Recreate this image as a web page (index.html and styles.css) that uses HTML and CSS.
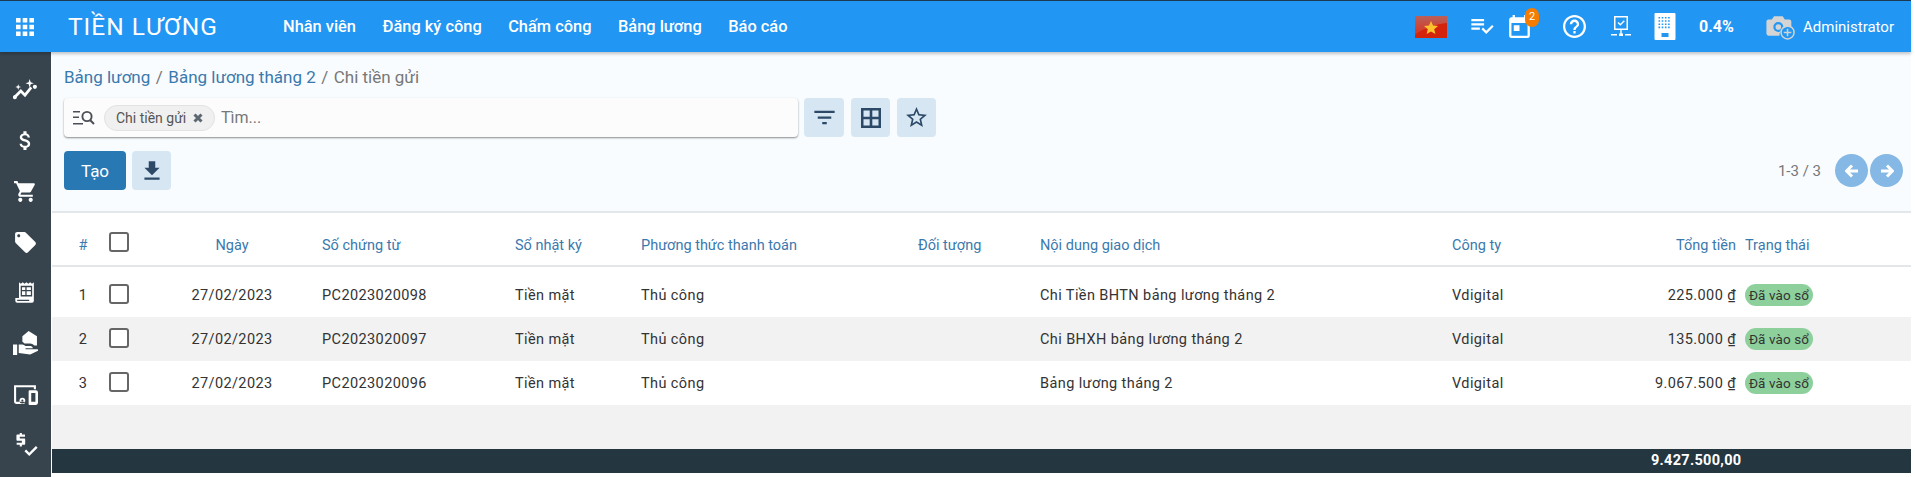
FILE: index.html
```html
<!DOCTYPE html>
<html lang="vi">
<head>
<meta charset="utf-8">
<title>Tiền lương</title>
<link rel="stylesheet" href="styles.css">
</head>
<body>
<div class="app">
  <header class="topbar">
    <svg class="apps" viewBox="0 0 18 18"><path d="M0 0h4.6v4.6H0zM6.7 0h4.6v4.6H6.7zM13.4 0H18v4.6h-4.6zM0 6.7h4.6v4.6H0zM6.7 6.7h4.6v4.6H6.7zM13.4 6.7H18v4.6h-4.6zM0 13.4h4.6V18H0zM6.7 13.4h4.6V18H6.7zM13.4 13.4H18V18h-4.6z"/></svg>
    <div class="brand">TIỀN LƯƠNG</div>
    <nav class="menu">
      <a>Nhân viên</a><a>Đăng ký công</a><a>Chấm công</a><a>Bảng lương</a><a>Báo cáo</a>
    </nav>
    <div class="systray">
      <svg class="flag" viewBox="0 0 32 22">
        <defs><linearGradient id="gloss" x1="0" y1="0" x2="0" y2="1"><stop offset="0" stop-color="#b9605a"/><stop offset="1" stop-color="#d9331f"/></linearGradient></defs>
        <rect width="32" height="22" fill="#d4230c"/>
        <path d="M0 0h32v7C22 8 8 12 0 19z" fill="url(#gloss)"/>
        <polygon points="16,5 18,9.6 23,10 19.2,13.2 20.4,18 16,15.4 11.6,18 12.8,13.2 9,10 14,9.6" fill="#fdc32c"/>
      </svg>
      <svg class="tray-list" viewBox="2 5 21 16"><path d="M14 10H2v2h12v-2zm0-4H2v2h12V6zM2 16h8v-2H2v2zm19.5-4.5L23 13l-6.99 7-4.51-4.5L13 14l3.01 3 5.49-5.5z"/></svg>
      <div class="cal">
        <svg class="tray-cal" viewBox="3 1 18 20"><path d="M19 3h-1V1h-2v2H8V1H6v2H5c-1.11 0-1.99.9-1.99 2L3 19c0 1.1.89 2 2 2h14c1.1 0 2-.9 2-2V5c0-1.1-.9-2-2-2zm0 16H5V8h14v11zM7 10h5v5H7z"/></svg>
        <span class="badge">2</span>
      </div>
      <svg class="tray-help" viewBox="2 2 20 20"><path d="M11 18h2v-2h-2v2zm1-16C6.48 2 2 6.48 2 12s4.48 10 10 10 10-4.48 10-10S17.52 2 12 2zm0 18c-4.41 0-8-3.59-8-8s3.59-8 8-8 8 3.59 8 8-3.59 8-8 8zm0-14c-2.21 0-4 1.79-4 4h2c0-1.1.9-2 2-2s2 .9 2 2c0 2-3 1.75-3 5h2c0-2.25 3-2.5 3-5 0-2.21-1.79-4-4-4z"/></svg>
      <svg class="tray-mon" viewBox="0 0 20 22"><path d="M3 0h14v14H3zM4.500 1.500v11h11v-11z" fill-rule="evenodd"/><path d="M6.500 7l1-1 1.800 1.800L12.800 4.300l1 1L9.300 9.800z"/><path d="M9.300 14h1.400v4H9.300zM0 18h6v1.400H0zM14 18h6v1.400h-6zM8 17.600h4V20H8z"/></svg>
      <svg class="tray-bld" viewBox="0 0 21 27"><path fill-rule="evenodd" d="M1 0h19a1 1 0 0 1 1 1v25a1 1 0 0 1-1 1H1a1 1 0 0 1-1-1V1a1 1 0 0 1 1-1zM7 20v4h7v-4zM4 4v1.600h1.600V4zM7.200 4v1.600h1.600V4zM10.400 4v1.600H12V4zM13.600 4v1.600h1.600V4zM4 7.200v1.600h1.600V7.200zM7.200 7.200v1.600h1.600V7.200zM10.400 7.200v1.600H12V7.200zM13.600 7.200v1.600h1.600V7.200zM4 10.400V12h1.600v-1.600zM7.200 10.400V12h1.600v-1.600zM10.400 10.400V12H12v-1.600zM13.600 10.400V12h1.600v-1.600zM4 13.600v1.600h1.600v-1.600zM7.200 13.600v1.600h1.600v-1.600zM10.400 13.600v1.600H12v-1.600zM13.600 13.600v1.600h1.600v-1.600z"/></svg>
      <span class="percent">0.4%</span>
      <svg class="tray-cam" viewBox="0 0 26 24"><path d="M7 2h8l2 3h4a2 2 0 0 1 2 2v5.500A8 8 0 0 0 12 20H2a2 2 0 0 1-2-2V7a2 2 0 0 1 2-2h3z" fill="#d4d4d4"/><circle cx="11" cy="12" r="4.600" fill="#2196f3"/><circle cx="11" cy="12" r="2.600" fill="#d4d4d4"/><circle cx="19.500" cy="17" r="6" fill="none" stroke="#d4d4d4" stroke-width="1.400"/><path d="M19.500 13.500v7M16 17h7" stroke="#d4d4d4" stroke-width="1.400"/></svg>
      <span class="user">Administrator</span>
    </div>
  </header>

  <aside class="sidebar">
    <svg class="side-ico" viewBox="0 0 24 24"><path d="M1.500 18.500l6-6 4 4 6-7.500" fill="none" stroke="#fff" stroke-width="2.600"/><circle cx="1.800" cy="18.500" r="1.900" fill="#fff"/><circle cx="21" cy="8.500" r="2" fill="#fff"/><path d="M16 1l1 3 3 1-3 1-1 3-1-3-3-1 3-1zM5 6l.7 2 2 .7-2 .7-.7 2-.7-2-2-.7 2-.7z" fill="#fff"/></svg>
    <svg class="side-ico" viewBox="0 0 24 24"><path d="M11.800 10.900c-2.270-.59-3-1.200-3-2.150 0-1.090 1.010-1.850 2.700-1.850 1.780 0 2.440.85 2.500 2.100h2.210c-.07-1.720-1.120-3.300-3.210-3.810V3h-3v2.160c-1.940.42-3.500 1.680-3.500 3.610 0 2.310 1.910 3.460 4.700 4.130 2.500.6 3 1.480 3 2.410 0 .69-.49 1.790-2.700 1.790-2.060 0-2.870-.92-2.980-2.100h-2.200c.12 2.190 1.760 3.420 3.680 3.830V21h3v-2.150c1.950-.37 3.500-1.500 3.500-3.550 0-2.840-2.430-3.810-4.700-4.400z"/></svg>
    <svg class="side-ico" viewBox="0 0 24 24"><path d="M7 18c-1.100 0-1.990.9-1.990 2S5.900 22 7 22s2-.9 2-2-.9-2-2-2zM1 2v2h2l3.600 7.590-1.350 2.450c-.16.28-.25.61-.25.96 0 1.100.9 2 2 2h12v-2H7.420c-.14 0-.25-.11-.25-.25l.03-.12.9-1.630h7.450c.75 0 1.410-.41 1.750-1.030l3.580-6.490c.08-.14.12-.31.12-.48 0-.55-.45-1-1-1H5.210l-.94-2H1zm16 16c-1.100 0-1.990.9-1.990 2s.89 2 1.990 2 2-.9 2-2-.9-2-2-2z"/></svg>
    <svg class="side-ico" viewBox="0 0 24 24"><path d="M21.410 11.580l-9-9C12.050 2.220 11.550 2 11 2H4c-1.100 0-2 .9-2 2v7c0 .55.22 1.050.59 1.420l9 9c.36.36.86.58 1.410.58.55 0 1.050-.22 1.410-.59l7-7c.37-.36.59-.86.59-1.410 0-.55-.23-1.060-.59-1.420zM5.500 7C4.670 7 4 6.330 4 5.500S4.670 4 5.500 4 7 4.670 7 5.500 6.330 7 5.500 7z"/></svg>
    <svg class="side-ico" viewBox="-1.500 -1.500 27 27"><path d="M5 1l2 1.500L9 1l2 1.500L13 1l2 1.500L17 1l2 1.500L21 1v20a2 2 0 0 1-2 2H3a2 2 0 0 1-2-2v-3h4z"/><path d="M7.500 5.500h11v10h-11zM7.500 10h11M12.500 5.500v10M3 20.500h13" fill="none" stroke="#37444e" stroke-width="1.400"/></svg>
    <svg class="side-ico" viewBox="0 0 24 24"><path fill-rule="evenodd" d="M15 0l8 5v9h-2.500c-1.200-1.300-2.500-2-4-2H11c-.700-.700-1.300-1.300-2-1.600V5zM0 13h4v10H0zM5.500 13H9c1 0 2 .5 3 1.500h4.500c1.500 0 2.500 1 2.500 2h-7v1h11c1.500 0 1.800 1 1 1.500l-7.500 3.500L5.500 21z"/></svg>
    <svg class="side-ico" viewBox="0 0 24 24"><path fill-rule="evenodd" d="M1 3h21v4h-2V5H3v14h8v2H3a2 2 0 0 1-2-2zM16 8h6a2 2 0 0 1 2 2v10a2 2 0 0 1-2 2h-6a1 1 0 0 1-1-1V9a1 1 0 0 1 1-1zM17.500 10.500V19h4v-8.500zM9 15a2.800 2.800 0 1 1 0 5.600A2.800 2.800 0 0 1 9 15zM9 16.800a1 1 0 1 0 0 2 1 1 0 0 0 0-2z"/></svg>
    <svg class="side-ico" viewBox="0 0 24 24"><path d="M6.500 1h2v1.500h3v2h-5v1.800h4.200c.600 0 1 .400 1 1v4c0 .600-.400 1-1 1H8.500V14h-2v-1.700h-3v-2h5V8.500H4.300c-.600 0-1-.400-1-1V3.500c0-.600.400-1 1-1h2.200zM11 18.500l1.600-1.600 3 3L22 13.500l1.600 1.600-8 8z"/></svg>
  </aside>

  <main class="content">
    <section class="control">
      <div class="crumbs">
        <a>Bảng lương</a><i>/</i><a>Bảng lương tháng 2</a><i>/</i><span>Chi tiền gửi</span>
      </div>
      <div class="search-row">
        <div class="search">
          <svg class="search-ico" viewBox="0 0 22 15"><path d="M0 1h7v1.600H0zM0 6.500h6v1.600H0zM0 13h10v1.600H0z"/><circle cx="14" cy="6.500" r="4.600" fill="none" stroke="#4a4f55" stroke-width="1.900"/><path d="M17 10l4 4" stroke="#4a4f55" stroke-width="2"/></svg>
          <div class="facet">Chi tiền gửi
            <svg class="facet-x" viewBox="0 0 10 10"><path d="M1.500 1.500l7 7M8.500 1.500l-7 7"/></svg>
          </div>
          <span class="placeholder">Tìm...</span>
        </div>
        <button class="tool tool-filter"><svg viewBox="0 0 24 24"><path d="M10 18h4v-2h-4v2zM3 6v2h18V6H3zm3 7h12v-2H6v2z"/></svg></button>
        <button class="tool tool-grid"><svg viewBox="0 0 24 24"><path fill-rule="evenodd" d="M2 2h20v20H2zM4.500 4.500v6.200h6.200V4.500zM13.300 4.500v6.200h6.200V4.500zM4.500 13.300v6.200h6.200v-6.200zM13.300 13.300v6.200h6.200v-6.200z"/></svg></button>
        <button class="tool tool-star"><svg viewBox="0 0 24 24"><path d="M22 9.240l-7.190-.62L12 2 9.190 8.630 2 9.240l5.460 4.730L5.820 21 12 17.270 18.180 21l-1.630-7.030L22 9.240zM12 15.400l-3.760 2.270 1-4.280-3.320-2.880 4.380-.38L12 6.100l1.710 4.040 4.380.38-3.320 2.880 1 4.280L12 15.400z"/></svg></button>
      </div>
      <div class="action-row">
        <button class="create">Tạo</button>
        <button class="tool tool-dl"><svg viewBox="0 0 24 24"><path d="M19 9h-4V3H9v6H5l7 7 7-7zM5 18v2h14v-2H5z"/></svg></button>
        <div class="pager">
          <span class="pager-text">1-3 / 3</span>
          <button class="round"><svg viewBox="0 0 14 14"><path d="M7 1.500L1.500 7 7 12.500M2 7h11"/></svg></button>
          <button class="round"><svg viewBox="0 0 14 14"><path d="M7 1.500L12.500 7 7 12.500M12 7H1"/></svg></button>
        </div>
      </div>
    </section>

    <section class="list">
      <table class="grid">
        <colgroup>
          <col class="c-no"><col class="c-chk"><col class="c-date"><col class="c-doc"><col class="c-jrn"><col class="c-pay"><col class="c-obj"><col class="c-desc"><col class="c-co"><col class="c-amt"><col class="c-state">
        </colgroup>
        <thead>
          <tr>
            <th class="no">#</th><th class="th-check"><span class="check"></span></th><th class="mid">Ngày</th><th>Số chứng từ</th><th>Sổ nhật ký</th><th>Phương thức thanh toán</th><th>Đối tượng</th><th>Nội dung giao dịch</th><th>Công ty</th><th class="end">Tổng tiền</th><th class="state">Trạng thái</th>
          </tr>
        </thead>
        <tbody>
          <tr>
            <td class="no">1</td><td><span class="check"></span></td><td class="mid">27/02/2023</td><td>PC2023020098</td><td>Tiền mặt</td><td>Thủ công</td><td></td><td>Chi Tiền BHTN bảng lương tháng 2</td><td>Vdigital</td><td class="end">225.000 <u>₫</u></td><td class="state"><span class="pill">Đã vào sổ</span></td>
          </tr>
          <tr>
            <td class="no">2</td><td><span class="check"></span></td><td class="mid">27/02/2023</td><td>PC2023020097</td><td>Tiền mặt</td><td>Thủ công</td><td></td><td>Chi BHXH bảng lương tháng 2</td><td>Vdigital</td><td class="end">135.000 <u>₫</u></td><td class="state"><span class="pill">Đã vào sổ</span></td>
          </tr>
          <tr>
            <td class="no">3</td><td><span class="check"></span></td><td class="mid">27/02/2023</td><td>PC2023020096</td><td>Tiền mặt</td><td>Thủ công</td><td></td><td>Bảng lương tháng 2</td><td>Vdigital</td><td class="end">9.067.500 <u>₫</u></td><td class="state"><span class="pill">Đã vào sổ</span></td>
          </tr>
        </tbody>
      </table>
      <div class="filler"></div>
      <div class="totals"><span>9.427.500,00</span></div>
    </section>
  </main>
</div>
</body>
</html>
```

FILE: styles.css
```css
* { box-sizing: border-box; }
html, body { margin: 0; height: 100%; background: #fff; overflow: hidden; }
body { font-family: Roboto, "Liberation Sans", sans-serif; color: #333; }
button { border: 0; padding: 0; font: inherit; }

.app {
  width: 1911px;
  height: 477px;
  border-top: 1px solid #1d3a52;
  display: grid;
  grid-template-columns: 51px 1fr;
  grid-template-rows: 51px 1fr;
}

/* top bar */
.topbar {
  grid-column: 1 / 3;
  background: #2196f3;
  display: flex;
  align-items: center;
  color: #fff;
  fill: #fff;
  box-shadow: 0 2px 3px rgba(0,0,0,.22);
  position: relative;
  z-index: 2;
}
.apps { width: 18px; height: 18px; margin-left: 16px; }
.brand { margin-left: 34px; width: 215px; font-size: 24.500px; letter-spacing: 1px; }
.menu { display: flex; gap: 26.500px; font-size: 16.400px; font-weight: 500; }
.menu a { display: block; }
.systray { margin-left: auto; display: flex; align-items: center; padding-right: 17px; }
.flag { width: 32px; height: 22px; margin-right: 24px; }
.tray-list { width: 23px; height: 17px; margin-right: 15px; }
.cal { position: relative; width: 21px; height: 23px; margin-right: 33px; }
.tray-cal { width: 21px; height: 23px; display: block; }
.badge {
  position: absolute; left: 16px; top: -7px;
  width: 14px; height: 19px; border-radius: 7px;
  background: #f57c00; font-size: 11px; line-height: 17px; text-align: center;
}
.tray-help { width: 23px; height: 23px; margin-right: 25px; }
.tray-mon { width: 20px; height: 22px; margin-right: 23px; }
.tray-bld { width: 22px; height: 27px; margin-right: 23px; }
.percent { font-size: 16px; font-weight: 700; width: 67px; }
.tray-cam { width: 29px; height: 26px; margin-right: 8px; }
.user { font-size: 15px; }

/* sidebar */
.sidebar {
  background: #37444e;
  display: flex;
  flex-direction: column;
  align-items: center;
  gap: 25.700px;
  padding-top: 25.500px;
  fill: #fff;
}
.side-ico { width: 25px; height: 25px; flex: none; }

/* main */
.content { display: flex; flex-direction: column; background: #fff; padding-left: 1px; height: 421px; }
.control {
  background: #f8fcfe;
  height: 161px;
  border-bottom: 2px solid #e3e7ea;
  padding: 13px 8px 0 12px;
}
.crumbs { font-size: 17px; line-height: 24px; color: #777; display: flex; }
.crumbs a { color: #3a79ad; }
.crumbs i { font-style: normal; margin: 0 5.500px; }

.search-row { display: flex; margin-top: 9px; }
.search {
  width: 734px; height: 39px;
  background: #fcfcfc;
  border-radius: 4px;
  box-shadow: 0 1px 2px rgba(0,0,0,.45);
  display: flex; align-items: center;
  padding-left: 9px;
}
.search-ico { width: 22px; height: 15px; fill: #4a4f55; margin-right: 9px; }
.facet {
  height: 26px; width: 111px;
  border: 1px solid #e2e2e2; border-radius: 13px;
  background: #f0f0f0;
  font-size: 14px; line-height: 24px; color: #555;
  padding-left: 11px;
  display: flex; align-items: center; gap: 7px;
}
.facet-x { width: 10px; height: 10px; stroke: #5d6770; stroke-width: 3; fill: none; }
.placeholder { font-size: 16px; color: #777; margin-left: 6px; }

.tool {
  width: 39px; height: 39px;
  background: #d6e6f2;
  border-radius: 4px;
  display: flex; align-items: center; justify-content: center;
  fill: #2c4a68;
  margin-left: 7px;
}
.tool svg { width: 24px; height: 24px; }
.tool-filter { width: 40px; margin-left: 6px; }
.tool-filter svg { width: 27px; height: 27px; }
.tool-star svg { width: 25px; height: 25px; }
.tool-dl { margin-left: 6px; }
.tool-dl svg { width: 26px; height: 26px; }

.action-row { display: flex; align-items: center; margin-top: 14px; height: 39px; }
.create {
  width: 62px; height: 39px;
  background: #2878b4; color: #fff;
  border-radius: 4px; font-size: 17px;
}
.pager { margin-left: auto; display: flex; align-items: center; }
.pager-text { font-size: 15px; color: #777; margin-right: 12px; }
.round {
  width: 33px; height: 33px; border-radius: 50%;
  background: #85b8e4;
  display: flex; align-items: center; justify-content: center;
  margin-left: 2px;
}
.round svg { width: 14px; height: 14px; fill: none; stroke: #fff; stroke-width: 3; }

/* list */
.list { flex: 1; display: flex; flex-direction: column; background: #f2f2f2; }
.grid { width: 1859px; border-collapse: collapse; table-layout: fixed; font-size: 14.500px; background: #fff; }
.c-no { width: 52px; } .c-chk { width: 38px; } .c-date { width: 180px; } .c-doc { width: 193px; }
.c-jrn { width: 126px; } .c-pay { width: 277px; } .c-obj { width: 122px; } .c-desc { width: 412px; }
.c-co { width: 148px; } .c-amt { width: 136px; }
thead tr { height: 53px; border-bottom: 2px solid #e3e7ea; }
th { font-weight: 400; text-align: left; color: #3a79ad; padding: 12px 0 0; }
th.th-check { padding-top: 7px; }
td { height: 44px; padding: 0; color: #333; letter-spacing: .4px; }
tbody::before { content: ""; display: block; height: 6px; }
tbody tr:nth-child(even) td { background: #f2f2f2; }
th.no, td.no { text-align: center; padding-left: 10px; }
.mid { text-align: center; }
.end { text-align: right; }
th.state, td.state { padding-left: 9px; }
.check {
  display: block; width: 20px; height: 20px; margin: 0 0 2px 5px;
  border: 2px solid #666; border-radius: 3px; background: #fff;
}
.pill {
  display: inline-block; width: 68px; height: 22px;
  background: #8dd09c; border-radius: 11px;
  font-size: 13.500px; line-height: 22px; text-align: center;
  letter-spacing: .1px;
}
.filler { flex: 1; }
.totals {
  height: 24px; background: #243640; color: #fff;
  font-size: 14.500px; font-weight: 700; line-height: 24px;
  padding-left: 1599px;
  letter-spacing: .3px;
}
```
